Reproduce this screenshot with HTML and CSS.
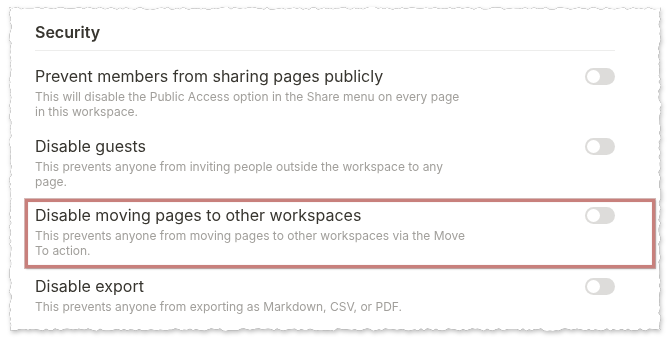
FILE: index.html
```html
<!DOCTYPE html>
<html lang="en">
<head>
    <meta charset="UTF-8">
    <meta name="viewport" content="width=device-width, initial-scale=1.0">
    <title>Security settings</title>
    <link rel="stylesheet" href="styles.css">
</head>
<body>
    <div class="paper">
        <div class="sheet" id="sheet">
            <h2 class="section-title">Security</h2>
            <div class="divider"></div>
            <div class="setting">
                <div class="setting-text">
                    <div class="setting-name">Prevent members from sharing pages publicly</div>
                    <div class="setting-desc">This will disable the Public Access option in the Share menu on every page in this workspace.</div>
                </div>
                <div class="toggle"><span class="knob"></span></div>
            </div>
            <div class="setting">
                <div class="setting-text">
                    <div class="setting-name">Disable guests</div>
                    <div class="setting-desc">This prevents anyone from inviting people outside the workspace to any page.</div>
                </div>
                <div class="toggle"><span class="knob"></span></div>
            </div>
            <div class="setting highlighted">
                <div class="setting-text">
                    <div class="setting-name">Disable moving pages to other workspaces</div>
                    <div class="setting-desc">This prevents anyone from moving pages to other workspaces via the Move To action.</div>
                </div>
                <div class="toggle"><span class="knob"></span></div>
            </div>
            <div class="setting">
                <div class="setting-text">
                    <div class="setting-name">Disable export</div>
                    <div class="setting-desc">This prevents anyone from exporting as Markdown, CSV, or PDF.</div>
                </div>
                <div class="toggle"><span class="knob"></span></div>
            </div>
        </div>
    </div>
    <script src="script.js"></script>
</body>
</html>
```

FILE: styles.css
```css
body {
    font-family: "Inter", "Liberation Sans", sans-serif;
    margin: 0;
    padding: 0;
    background-color: #ffffff;
    color: #37352f;
}
.paper {
    padding: 7px 8px 11px 9px;
    filter: drop-shadow(0 0 0.7px rgba(0, 0, 0, 0.7)) drop-shadow(1px 2px 2px rgba(0, 0, 0, 0.25));
}
.sheet {
    background-color: #ffffff;
    height: 324px;
    box-sizing: border-box;
    padding: 15px 46px 0 26px;
}
.section-title {
    margin: 0;
    font-size: 16px;
    font-weight: 600;
    line-height: 20px;
}
.divider {
    height: 1px;
    background-color: #ededec;
    margin: 8px 0 7px 0;
}
.setting {
    display: flex;
    justify-content: space-between;
    align-items: flex-start;
    padding: 8px 0 9px 0;
}
.setting.highlighted {
    margin: 1px -40px 0 -10px;
    padding: 3px 37px 7px 7px;
    border: 3px solid #c8807c;
    box-shadow: 0 0 0 1px rgba(140, 60, 55, 0.35), 1px 1px 2px rgba(0, 0, 0, 0.25), inset 0 0 1px rgba(140, 60, 55, 0.4);
}
.setting-name {
    font-size: 16px;
    line-height: 20px;
}
.setting-desc {
    margin-top: 3px;
    font-size: 12px;
    line-height: 15px;
    color: #a19f9b;
    max-width: 432px;
}
.toggle {
    width: 30px;
    height: 17px;
    margin-top: 2px;
    border-radius: 9px;
    background-color: #dddcda;
    padding: 2px;
    box-sizing: border-box;
    flex-shrink: 0;
}
.knob {
    display: block;
    width: 13px;
    height: 13px;
    border-radius: 50%;
    background-color: #ffffff;
}
```

FILE: script.js
```js
// rough torn-paper edge round the sheet
const sheet = document.getElementById('sheet');
let seed = 11;
function rand() {
    seed = (seed * 16807) % 2147483647;
    return seed / 2147483647;
}
function tear() {
    return (rand() * 2.6).toFixed(1);
}
const w = sheet.offsetWidth;
const h = sheet.offsetHeight;
const pts = [];
for (let x = 0; x < w; x += 3) pts.push(`${x}px ${tear()}px`);
for (let y = 0; y < h; y += 3) pts.push(`calc(100% - ${tear()}px) ${y}px`);
for (let x = w; x > 0; x -= 3) pts.push(`${x}px calc(100% - ${tear()}px)`);
for (let y = h; y > 0; y -= 3) pts.push(`${tear()}px ${y}px`);
sheet.style.clipPath = `polygon(${pts.join(', ')})`;
```
